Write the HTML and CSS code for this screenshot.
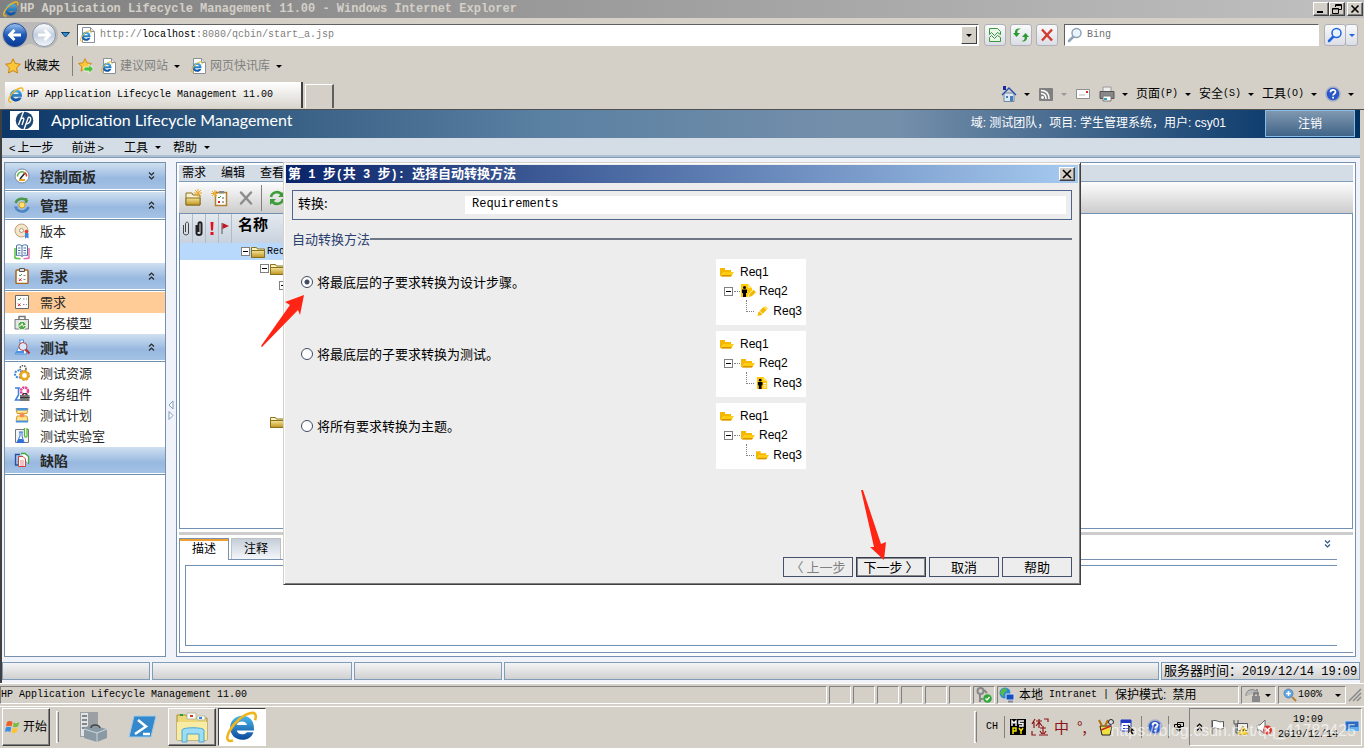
FILE: index.html
```html
<!DOCTYPE html>
<html lang="zh-CN">
<head>
<meta charset="utf-8">
<title>HP Application Lifecycle Management 11.00</title>
<link rel="stylesheet" href="styles.css">
</head>
<body>
<svg class="sprite" aria-hidden="true">
  <defs>
    <linearGradient id="gBlue" x1="0" y1="0" x2="0" y2="1"><stop offset="0" stop-color="#9cc4f0"/><stop offset=".5" stop-color="#1d58b8"/><stop offset="1" stop-color="#0a3a90"/></linearGradient>
    <linearGradient id="gGrey" x1="0" y1="0" x2="0" y2="1"><stop offset="0" stop-color="#fff"/><stop offset=".5" stop-color="#c2cede"/><stop offset="1" stop-color="#f4f8fc"/></linearGradient>
    <linearGradient id="gFold" x1="0" y1="0" x2="0" y2="1"><stop offset="0" stop-color="#f4e498"/><stop offset="1" stop-color="#c09420"/></linearGradient>
    <linearGradient id="gIe" x1="0" y1="0" x2="0" y2="1"><stop offset="0" stop-color="#4cb8ec"/><stop offset="1" stop-color="#0a489c"/></linearGradient>
  </defs>
  <symbol id="ie" viewBox="0 0 16 16">
    <path d="M14 9.700H5.400c.2 1.100 1.200 1.900 2.700 1.900 1 0 1.800-.3 2.300-1h3.300C12.900 13 11 14.400 8.200 14.400c-3.600 0-6.100-2.500-6.100-6S4.600 2.400 8.100 2.400c3.900 0 6.200 2.900 5.900 7.300zM5.400 7h5.100C10.300 5.900 9.400 5.200 8 5.200S5.600 5.900 5.400 7z" fill="url(#gIe)"/>
    <path d="M3.500 14.800C.6 15.600-.3 13.800 1.800 9.900 4.200 5.400 9 1.600 12.500 1c2.300-.4 2.900 1.200 2 3.600" fill="none" stroke="#f0b41c" stroke-width="1.300"/>
  </symbol>
  <symbol id="page" viewBox="0 0 16 16">
    <path d="M2.500 .5h8l4 4v11h-12z" fill="#fff" stroke="#8a9099"/><path d="M10.500 .5v4h4" fill="#dde" stroke="#8a9099"/>
    <use href="#ie" x="0" y="3" width="12" height="12"/>
  </symbol>
  <symbol id="star" viewBox="0 0 16 16"><path d="M8 .8l2.200 4.700 5.200.7-3.800 3.600.9 5.200L8 12.500 3.500 15l.9-5.200L.6 6.200l5.200-.7z" fill="#fcc83a" stroke="#c98210"/></symbol>
  <symbol id="open" viewBox="0 0 14 10"><path d="M0 1h5v2h6v2H4L1 9H0z" fill="#f4b800"/><path d="M4 5h10l-3 4.500H1z" fill="#ffcc10"/><path d="M1 9.500h10l1-1.500H2z" fill="#d89400"/></symbol>
  <symbol id="folder" viewBox="0 0 14 12"><path d="M.5 1.500h5l1 1.500h7v8.500H.5z" fill="#fff4c0" stroke="#88701c"/><path d="M.5 4.500h13v7H.5z" fill="url(#gFold)" stroke="#88701c"/></symbol>
  <symbol id="person" viewBox="0 0 12 13"><path d="M0 0h7l4 4v9H0z" fill="#ffc800"/><path d="M7 0v4h4z" fill="#ffe680"/><path d="M7 7h3M7 9h3M7 11h3" stroke="#fff"/><circle cx="3.500" cy="3.500" r="1.500"/><path d="M1 5.500h5V9H5v4H2V9H1z"/></symbol>
  <symbol id="pencil" viewBox="0 0 12 12"><path d="M1 11l1-4 5-5 3 3-5 5z" fill="#f4b800"/><path d="M7 2l2-1 2.500 2.500L10 5z" fill="#ffdc50"/><path d="M3 6l3 3" stroke="#fff"/></symbol>
  <symbol id="persondoc" viewBox="0 0 16 14"><path d="M0 0h7l4 4v9H0z" fill="#ffc800"/><path d="M7 0v4h4z" fill="#ffe680"/><circle cx="3.500" cy="3.500" r="1.500"/><path d="M1 5.500h5V9H5v4H2V9H1z"/><path d="M7 13.500l1-3.500 4.500-4.500L15.500 8 11 12.500z" fill="#f4b800" stroke="#fff" stroke-width=".8"/></symbol>
  <symbol id="magnify" viewBox="0 0 16 16"><path d="M6.500 9.500L2 14" stroke="currentColor" stroke-width="2.500" stroke-linecap="round"/><circle cx="9.500" cy="6" r="4.500" fill="#eaf4ff" stroke="currentColor" stroke-width="1.500"/></symbol>
  <symbol id="help" viewBox="0 0 16 16"><circle cx="8" cy="8" r="7" fill="#2a56c8" stroke="#a4aec4" stroke-width="1.500"/><path d="M5.500 6.300C5.500 3.200 10.500 3.200 10.500 6c0 1.800-2.400 1.700-2.400 3.500" fill="none" stroke="#fff" stroke-width="1.700"/><path d="M7.200 10.800h1.800v1.700H7.200z" fill="#fff"/></symbol>
  <symbol id="chev" viewBox="0 0 7 8"><path d="M1 3.500L3.500 1 6 3.500M1 7.500L3.500 5 6 7.500" fill="none" stroke="currentColor" stroke-width="1.200"/></symbol>
  <symbol id="clip" viewBox="0 0 8 15"><path d="M1.500 4v8c0 2.500 5 2.500 5 0V3c0-2.500-3-2.500-3 0v8" fill="none" stroke="currentColor"/></symbol>
</svg>

<header class="titlebar">
  <svg class="i16"><use href="#ie"/></svg><h1>HP Application Lifecycle Management 11.00 - Windows Internet Explorer</h1>
  <div class="winbtns">
    <button aria-label="最小化"><svg class="i10" viewBox="0 0 10 10"><path d="M1 8h6" stroke="#000" stroke-width="2"/></svg></button>
    <button aria-label="还原"><svg class="i10" viewBox="0 0 10 10"><path d="M3.500 3V.5h6v5H7M3 1.500h7M.5 4.500h6v5h-6zM0 5h7" fill="none" stroke="#000"/></svg></button>
    <button class="apart" aria-label="关闭"><svg class="i10" viewBox="0 0 10 10"><path d="M1.500 1.500l7 7M8.500 1.500l-7 7" stroke="#000" stroke-width="1.600"/></svg></button>
  </div>
</header>

<div class="address">
  <svg class="nav" viewBox="0 0 58 28">
    <path d="M14 1h30a13 13 0 0 1 0 26c-8 0-10-4-15-4s-7 4-15 4a13 13 0 0 1 0-26z" fill="#bcbab8"/>
    <circle cx="14" cy="14" r="11.500" fill="url(#gBlue)" stroke="#28509a"/><path d="M20 14H9M13.500 9l-5 5 5 5" fill="none" stroke="#fff" stroke-width="2.800"/>
    <circle cx="43" cy="14" r="11.500" fill="url(#gGrey)" stroke="#8894a8"/><path d="M37 14h11M43.500 9l5 5-5 5" fill="none" stroke="#fff" stroke-width="2.800"/>
  </svg>
  <svg class="recent" viewBox="0 0 9 6"><path d="M.5 .5h8L4.500 5z" fill="#2e90d0" stroke="#0c3c70"/></svg>
  <div class="well url"><svg class="i16"><use href="#page"/></svg><span class="urltext" role="textbox">http://<b>localhost</b>:8080/qcbin/start_a.jsp</span><button class="drop" aria-label="展开"><i class="tri"></i></button></div>
  <button class="soft" aria-label="兼容性视图"><svg class="i16" viewBox="0 0 16 16"><path d="M2.500 7.500v-6h8l3 3v3l-3-2-3 3-3-3zM2.500 14.500v-4l2-2 3 3 3-3 3 2v4z" fill="#eaf6e8" stroke="#38983c"/></svg></button>
  <button class="soft" aria-label="刷新"><svg class="i16" viewBox="0 0 16 16"><path d="M8 2C5 2 4 4 4.500 6H7L3.500 10 0 6h2C1.500 3 4 .5 8 2zM8 14c3 0 4-2 3.500-4H9l3.500-4L16 10h-2c.5 3-2 5.500-6 4z" fill="#2c9c30"/></svg></button>
  <button class="soft" aria-label="停止"><svg class="i16" viewBox="0 0 16 16"><path d="M3 2.500l10 11M13 2.500l-10 11" stroke="#d03c34" stroke-width="2.500"/></svg></button>
  <div class="well search"><svg class="i16 slate"><use href="#magnify"/></svg><input aria-label="搜索" placeholder="Bing"></div>
  <div class="split"><button class="soft" aria-label="搜索"><svg class="i16 blue"><use href="#magnify"/></svg></button><button class="soft narrow" aria-label="搜索选项"><i class="tri"></i></button></div>
</div>

<nav class="favorites">
  <svg class="i16"><use href="#star"/></svg><button>收藏夹</button><i class="vbar"></i>
  <svg class="i16" viewBox="0 0 16 16"><use href="#star" width="14" height="14"/><path d="M6 9h5V6.500l4.500 4.500-4.500 4.500V13H6z" fill="#48c038" stroke="#fff" stroke-width=".7"/></svg>
  <svg class="i16 gap"><use href="#page"/></svg><button class="dim">建议网站<i class="tri"></i></button>
  <svg class="i16 gap"><use href="#page"/></svg><button class="dim">网页快讯库<i class="tri"></i></button>
</nav>

<div class="tabs">
  <button class="tab"><svg class="i16"><use href="#ie"/></svg>HP Application Lifecycle Management 11.00</button><button class="newtab" aria-label="新选项卡"></button>
  <div class="commands">
    <button aria-label="主页"><svg class="i16" viewBox="0 0 16 16"><path d="M3 7h10v8.500H3z" fill="#dce8f4" stroke="#7088a8"/><path d="M8 1L.5 8.500l1 1L8 3l6.500 6.500 1-1z" fill="#2850a8"/><path d="M2 0h3v4H2z" fill="#182ca0"/><path d="M9 10h3v5H9zM5 10h2v2H5z" fill="#487cb4"/></svg><i class="tri"></i></button>
    <button aria-label="源"><svg class="i16" viewBox="0 0 16 16"><rect x="1" y="2" width="14" height="13" rx="1" fill="#808080"/><circle cx="4.500" cy="11.500" r="1.400" fill="#fff"/><path d="M3 7.500c3 0 5 2 5 5.500M3 4.500c5 0 8 3 8 8.500" fill="none" stroke="#fff" stroke-width="1.500"/></svg><i class="tri pale"></i></button>
    <button aria-label="邮件"><svg class="i16" viewBox="0 0 16 16"><path d="M1.500 3.500h13v9h-13z" fill="#fcfcfc" stroke="#909090"/><path d="M11 5h2v2h-2z" fill="#d03030"/><path d="M4 9h6" stroke="#bbb"/></svg></button>
    <button aria-label="打印"><svg class="i16" viewBox="0 0 16 16"><path d="M4 1h8v5H4z" fill="#eee" stroke="#999"/><path d="M1 5.500h14v7H1z" fill="#888" stroke="#555"/><path d="M4 10h8v5H4z" fill="#fff" stroke="#777"/><path d="M5 12h3v2H5z" fill="#30a8b0"/></svg><i class="tri"></i></button>
    <button>页面<span class="lat">(P)</span><i class="tri"></i></button>
    <button>安全<span class="lat">(S)</span><i class="tri"></i></button>
    <button>工具<span class="lat">(O)</span><i class="tri"></i></button>
    <button aria-label="帮助"><svg class="i16"><use href="#help"/></svg><i class="tri"></i></button>
  </div>
</div>

<main class="app">
  <div class="brand">
    <svg class="hp" viewBox="0 0 29 19"><rect width="29" height="19" fill="#fff"/><circle cx="14.500" cy="9.500" r="8.800" fill="#1c4674"/><path d="M13.500 .5L8.500 14M10.500 8.500c3-2.500 4-1.500 3 1L12 14M18.500 6L14 18.500M18 6.500c4.500-1.500 3 6-2 6.500" fill="none" stroke="#fff" stroke-width="1.400"/></svg>
    <h2>Application Lifecycle Management</h2>
    <p>域: 测试团队，项目: 学生管理系统，用户: csy01</p>
    <button>注销</button>
  </div>
  <nav class="menu"><button><small>&lt;</small>上一步</button><button>前进<small>&gt;</small></button><button>工具<i class="tri"></i></button><button>帮助<i class="tri"></i></button></nav>

  <div class="work">
    <aside class="side">
      <section><h3><svg class="i16" viewBox="0 0 16 16"><circle cx="8" cy="8" r="7" fill="#fff" stroke="#789"/><path d="M3.500 8.500a4.500 4.500 0 0 1 7-4" fill="none" stroke="#5cb450" stroke-width="1.500"/><path d="M10.500 4.500a4 4 0 0 1 2 4" fill="none" stroke="#e04020" stroke-width="1.500"/><path d="M6 11l4.500-5.500" stroke="#222" stroke-width="1.500"/><path d="M5 12h6" stroke="#e4a420" stroke-width="2"/></svg>控制面板<svg class="chev down"><use href="#chev"/></svg></h3></section>
      <section><h3><svg class="i16" viewBox="0 0 16 16"><path d="M1.500 6a7 7 0 0 1 12-1.500M12 1v5" fill="none" stroke="#4c9848" stroke-width="2.500"/><path d="M14.500 10a7 7 0 0 1-12 2" fill="none" stroke="#4c84c0" stroke-width="2.500"/><path d="M0 9.500h4l-2 4z" fill="#4c84c0"/><circle cx="8" cy="8" r="3" fill="#ffe46c" stroke="#d89c20"/></svg>管理<svg class="chev"><use href="#chev"/></svg></h3>
        <a href="#"><svg class="i16" viewBox="0 0 16 16"><circle cx="7.500" cy="7.500" r="6.500" fill="#f4e4c8" stroke="#c0a078"/><circle cx="7.500" cy="7.500" r="2" fill="#fff" stroke="#b09878"/><circle cx="12.500" cy="8.500" r="1.800" fill="#e03c30"/><path d="M11 10h3.500v5.500l-1.700-1-1.800 1z" fill="#3c88e0"/></svg>版本</a>
        <a href="#"><svg class="i16" viewBox="0 0 16 16"><path d="M1 4v10c2 1 4 0 5.500 1" fill="none" stroke="#5cc040" stroke-width="1.500"/><path d="M15 4v10c-2 1-4 0-5.500 1" fill="none" stroke="#e870b0" stroke-width="1.500"/><path d="M2.500 1.500c2-1 4-1 5.500.5 1.500-1.500 3.500-1.500 5.500-.5v10c-2-.5-4-.5-5.500 1-1.500-1.500-3.500-1.500-5.500-1z" fill="#fff" stroke="#4870a8"/><path d="M8 2v10M4 4h2.500M4 6.500h2.500M4 9h2.500M9.500 4H12M9.500 6.500H12M9.500 9H12" stroke="#4870a8"/></svg>库</a></section>
      <section><h3><svg class="i16" viewBox="0 0 16 16"><rect x="2" y="2" width="12" height="13.500" rx="1" fill="#fff" stroke="#a86820" stroke-width="1.500"/><path d="M5.500 .5h5v3h-5z" fill="#ddd" stroke="#555"/><path d="M5 7l1 1 2-2" fill="none" stroke="#3c9c40"/><path d="M5 10.500l2.500 2.500M7.500 10.500L5 13" stroke="#d02828"/><path d="M9.500 7.500h2M9.500 11.500h2" stroke="#888"/></svg>需求<svg class="chev"><use href="#chev"/></svg></h3>
        <a class="on" href="#"><svg class="i16" viewBox="0 0 16 16"><path d="M1.500 1.500h13v13h-13z" fill="#fff" stroke="#666"/><path d="M4 5l1 1 2-2" fill="none" stroke="#3c9c40"/><path d="M4 9.500L6.500 12M6.500 9.500L4 12" stroke="#d02828"/><path d="M9 5h1.500M12 5h1M9 10.500h1.500M12 10.500h1" stroke="#888"/></svg>需求</a>
        <a href="#"><svg class="i16" viewBox="0 0 16 16"><path d="M1 4.500h13.500v9.500H1z" fill="#e4e4e4" stroke="#777"/><path d="M5 4V1.500h6V4" fill="none" stroke="#777" stroke-width="1.500"/><circle cx="8" cy="10.500" r="4.300" fill="#54a84c" stroke="#fff"/><path d="M4.500 11h2l1.500-2.500 1.500 3 1-1h1.500" fill="none" stroke="#fff"/></svg>业务模型</a></section>
      <section><h3><svg class="i16" viewBox="0 0 16 16"><path d="M5 1h5M6 1v5L1 15h12L9.500 6V1" fill="#fff" stroke="#4c90e0"/><path d="M3 12h7v2.500H1.500z" fill="#4c90e0"/><circle cx="9" cy="7.500" r="4" fill="#dce8f8" stroke="#b04848"/><path d="M12 10.500l3.500 4" stroke="#b03030" stroke-width="2"/></svg>测试<svg class="chev"><use href="#chev"/></svg></h3>
        <a href="#"><svg class="i16" viewBox="0 0 16 16"><circle cx="9" cy="3.500" r="3" fill="none" stroke="#555" stroke-width="1.500" stroke-dasharray="1.500 1"/><circle cx="4.500" cy="9" r="3.500" fill="none" stroke="#3c80e0" stroke-width="2" stroke-dasharray="2 1"/><circle cx="10.500" cy="10.500" r="3.700" fill="#fff" stroke="#e8a820" stroke-width="2.500"/><circle cx="10.500" cy="10.500" r="5" fill="none" stroke="#d08c10" stroke-dasharray="2 1.900"/></svg>测试资源</a>
        <a href="#"><svg class="i16" viewBox="0 0 16 16"><path d="M1 2h5M4.500 2v7L1.500 14H7" fill="none" stroke="#3c80e0" stroke-width="1.500"/><circle cx="10.500" cy="5" r="3.500" fill="none" stroke="#e83c8c" stroke-width="2.500" stroke-dasharray="2 .8"/><path d="M6 9h9.500v6H6z" fill="#777"/><path d="M9 9V7.500h4V9M6 11.500h9.500" fill="none" stroke="#333"/></svg>业务组件</a>
        <a href="#"><svg class="i16" viewBox="0 0 16 16"><path d="M2 1.500h12l-1 5H3z" fill="#ffe48c" stroke="#d89830"/><path d="M2.500 1h11v2.500h-11z" fill="#4890d8"/><path d="M3 9h10l1 5.500H2z" fill="#ffe48c" stroke="#d89830"/><path d="M2 14.500h12" stroke="#4890d8" stroke-width="2"/><circle cx="8" cy="8" r="2.500" fill="#f09050"/></svg>测试计划</a>
        <a href="#"><svg class="i16" viewBox="0 0 16 16"><path d="M1.500 1.500h13v13h-13z" fill="#f4f4f4" stroke="#777"/><path d="M5 4h4M6 4v4l-3 6.500h7L8 8V4" fill="#fff" stroke="#2c70d8"/><path d="M4.500 11h4l1.500 4H3z" fill="#2c70d8"/><path d="M10.500 0v8c0 1.500 2.500 1.500 2.500 0V0" fill="#fff" stroke="#50b838" stroke-width="1.300"/></svg>测试实验室</a></section>
      <section><h3><svg class="i16" viewBox="0 0 16 16"><path d="M4 13H1.500V2.500H6" fill="none" stroke="#2850a0" stroke-width="1.300"/><path d="M7 1.500h4l3.500 3V12" fill="#fff" stroke="#40a838" stroke-width="1.300"/><path d="M4.500 4.500H9L11.500 7v7.500h-7z" fill="#fff" stroke="#d04040"/><path d="M6 9h4M6 11h4M6 13h4" stroke="#d88"/></svg>缺陷</h3></section>
    </aside>

    <div class="grip" aria-hidden="true"><svg viewBox="0 0 6 20"><path d="M5 1v8L1 5zM1 11.500v8l4-4z" fill="#fff" stroke="#7f9db9"/></svg></div>

    <section class="panel">
      <nav class="menu sub"><button>需求</button><button>编辑</button><button>查看</button></nav>
      <div class="tools">
        <button aria-label="新建文件夹"><svg class="i18" viewBox="0 0 18 18"><path d="M1 4h6l1 2h7v10H1z" fill="#f8f0d0" stroke="#88701c"/><path d="M1 9h14v7H1z" fill="url(#gFold)" stroke="#88701c"/><path d="M13 0v8M9 4h8M10 1l6 6M16 1l-6 6" stroke="#eca828"/></svg></button>
        <button aria-label="新建需求"><svg class="i18" viewBox="0 0 18 18"><path d="M4.500 3.500h11v13h-11z" fill="#fff" stroke="#b08030" stroke-width="1.500"/><path d="M8 2h5v2.500H8z" fill="#888"/><path d="M7 8l1 1 2-2" fill="none" stroke="#2c8c30"/><path d="M7 12l2 2M9 12l-2 2" stroke="#c22"/><path d="M11 9h2M11 13h2" stroke="#555"/><path d="M4 1v7M0 4.500h7M1 2l5 5M6 2L1 7" stroke="#eca828"/></svg></button>
        <button aria-label="删除"><svg class="i18" viewBox="0 0 18 18"><path d="M4 3.500l10 11M14 3.500L4 14.500" stroke="#8c8c8c" stroke-width="2.500" stroke-linecap="round"/></svg></button>
        <i class="vbar"></i>
        <button aria-label="刷新"><svg class="i18" viewBox="0 0 18 18"><path d="M3 8a6 6 0 0 1 11-2M15 10a6 6 0 0 1-11 2" fill="none" stroke="#3c9c38" stroke-width="2.600"/><path d="M16 2v6h-6zM2 16v-6h6z" fill="#3c9c38"/></svg></button>
      </div>
      <div class="grid">
        <div class="cols"><span><svg class="clip"><use href="#clip"/></svg></span><span><svg class="clip heavy"><use href="#clip"/></svg></span><span><svg class="clip" viewBox="0 0 8 15"><path d="M2.500 1h3L5 9.500H3zM2.500 11h3v3h-3z" fill="#e01020"/></svg></span><span><svg class="clip" viewBox="0 0 8 15"><path d="M1 2v11" stroke="#555"/><path d="M1.500 2l6.500 3-6.500 3z" fill="#c01820"/></svg></span><strong>名称</strong></div>
        <ul class="tree">
          <li class="l0 sel"><i class="box"></i><svg class="fold"><use href="#folder"/></svg><span>Requirements</span></li>
          <li class="l1"><i class="box"></i><svg class="fold"><use href="#folder"/></svg></li>
          <li class="l2"><i class="box"></i></li>
          <li></li><li></li><li></li><li></li><li></li><li></li><li></li>
          <li class="l1"><i class="box none"></i><svg class="fold"><use href="#folder"/></svg></li>
        </ul>
      </div>
      <div class="detail">
        <div class="dtabs"><button class="on">描述</button><button>注释</button><svg class="chev down"><use href="#chev"/></svg></div>
        <div class="dbody"><div class="memo"></div></div>
      </div>
    </section>
  </div>
  <footer class="cells"><span></span><span class="w2"></span><span></span><span class="w4"></span><span class="time">服务器时间：<span class="m">2019/12/14 19:09</span></span></footer>
</main>

<footer class="status">
  <span class="msg">HP Application Lifecycle Management 11.00</span>
  <span class="s"></span><span class="s"></span><span class="s"></span><span class="s"></span><span class="s"></span><span class="s"></span>
  <span class="s"><svg class="i16" viewBox="0 0 16 16"><circle cx="4.500" cy="4" r="3" fill="none" stroke="#888" stroke-width="2"/><path d="M4 7v8M4 12h3M8 3l3 3" stroke="#888" stroke-width="2"/><circle cx="11.500" cy="11.500" r="4.300" fill="#2ea838"/><path d="M9.500 11.500l1.500 1.500 2.500-3" fill="none" stroke="#fff" stroke-width="1.300"/></svg></span>
  <span class="zone"><svg class="i16" viewBox="0 0 16 16"><circle cx="6" cy="6" r="5.500" fill="#2c88d0"/><path d="M3 2l4-1 1 3-3 2-1 4-3-4z" fill="#58b848"/><path d="M7 7h8v6H7z" fill="#1450c0" stroke="#dde"/><path d="M9 14.500h5" stroke="#889" stroke-width="2"/></svg>本地<span class="lat"> Intranet | </span>保护模式:<span class="lat"> </span>禁用</span>
  <span class="lock"><svg class="i16" viewBox="0 0 16 16"><path d="M1 9a6 6 0 0 1 10-5l1-2 1 5H8" fill="#bbb" stroke="#888"/><path d="M7 9h8v6H7z" fill="#888"/><path d="M9 9V6h4v3" fill="none" stroke="#777" stroke-width="1.500"/></svg><i class="tri"></i></span>
  <span class="zoom"><svg class="i14" viewBox="0 0 14 14"><circle cx="5.500" cy="5.500" r="4.500" fill="#5aa4e8" stroke="#6888a8"/><path d="M3 5.500h5M5.500 3v5" stroke="#fff" stroke-width="1.500"/><path d="M9 9l4 4" stroke="#b88038" stroke-width="2"/></svg><span class="lat">100%</span><i class="tri end"></i></span>
  <svg class="i14" viewBox="0 0 14 14"><path d="M1 13L13 1M5 13l8-8M9 13l4-4" stroke="#888" stroke-width="1.500"/></svg>
</footer>

<footer class="taskbar">
  <button class="start"><svg class="i16" viewBox="0 0 16 16"><path d="M2 3c2-1.500 4-1 5.500 0l-1 4.500C5 6.500 3 6.500 1 7.500z" fill="#f05c28"/><path d="M8.500 3.500c2 1 4 .8 6-.5l-1.500 4.500c-1.500 1-3.500 1-5 .2z" fill="#7cbc3c"/><path d="M.8 8.500c2-1 3.700-1 5.500 0l-1 4.500c-1.700-1-3.500-1-5.300 0z" fill="#3c8ce0"/><path d="M7.500 9c1.700.8 3.500.8 5.500-.2l-1.500 4.500c-1.500 1-3.500 1-5 .2z" fill="#fcc430"/></svg>开始</button>
  <i class="vgroove"></i>
  <button class="task"><svg class="i32" viewBox="0 0 32 32"><path d="M4 1h18v25H4z" fill="#9aa0a4"/><path d="M5 2h7v23H5z" fill="#e0e4e6"/><path d="M6 5h5M6 9h5M6 13h5M6 17h5" stroke="#666" stroke-width="1.500"/><path d="M8 17l6-3 17 4v9l-10 4-13-4z" fill="#8a9aa4"/><path d="M8 18l13 4 10-4M21 22v9" fill="none" stroke="#cdd6dc"/><path d="M15 17c0-4 8-4 9 0" fill="none" stroke="#444" stroke-width="1.500"/></svg></button>
  <button class="task"><svg class="i32" viewBox="0 0 32 32"><path d="M8 5h22l-5 21H3z" fill="#3488cc" stroke="#a4cce8"/><path d="M12 9l8 6.500L9 23M17 23h7" fill="none" stroke="#fff" stroke-width="2.500"/></svg></button>
  <button class="task up"><svg class="i32" viewBox="0 0 32 32"><path d="M1 4h9l2 3h19v22H1z" fill="#ecd878" stroke="#a88c34"/><path d="M11 2h9v6h-9zM21 5h8v4h-8z" fill="#fff" stroke="#b8b8a0"/><path d="M4 3h3v2H4z" fill="#28a030"/><path d="M14 4h3v2h-3z" fill="#d03c20"/><path d="M23 6h3v2h-3z" fill="#2c88e0"/><path d="M1 11h30v18H1z" fill="#f8eca4"/><path d="M6 31V19c0-3 22-3 22 0v12h-5v-8H11v8z" fill="#9cdcf4" stroke="#4ca8d0"/></svg></button>
  <button class="task down"><svg class="i32"><use href="#ie"/></svg></button>
  <div class="tray">
    <i class="vgroove"></i><span class="lat ch">CH</span><i class="vbar"></i>
    <svg class="i16" viewBox="0 0 16 16"><path d="M0 0h16v16H0z"/><path d="M2 7V2l2 2 2-2v5M14 2H9v2.500h4V7H9" fill="none" stroke="#fff" stroke-width="1.400"/><path d="M3 15V9h3v3H3M9 9l2 3 2-3M11 12v3" fill="none" stroke="#f0e000" stroke-width="1.500"/></svg>
    <svg class="i18 red" viewBox="0 0 18 18"><path d="M4 1L1 6M3 4v6M8 1v9M5 3h6M8 4l-3 4M8 4l3 4M13 1h4v3M1 13v4h4M9 10h6M12 8v8M9 13l2 3M15 13l-2 3M8 17h9" fill="none" stroke="currentColor" stroke-width="1.200"/></svg>
    <span class="zhong">中</span><span class="zhong dot">°,</span>
    <svg class="i18" viewBox="0 0 18 18"><path d="M3 8h12l-2 9H5z" fill="#f0e040" stroke="#222"/><path d="M5 8L2 2M8 8l3-6" stroke="#b07010" stroke-width="2"/><circle cx="14" cy="4" r="2.500" fill="#ddd" stroke="#222"/><path d="M4 12l10-4" stroke="#c22" stroke-width="1.500"/></svg>
    <svg class="i16" viewBox="0 0 16 16"><path d="M1 1h10v11H1z" fill="#fff" stroke="#2038c0"/><path d="M1 1h10v3H1zM3 6h6v1H3zM3 9h6v1H3z" fill="#2038c0"/><path d="M8 5l7 7h-3l2 3-2 1-2-3-2 2z" stroke="#fff" stroke-width=".5"/></svg>
    <i class="vbar"></i><svg class="i16"><use href="#help"/></svg><i class="vbar"></i>
    <svg class="i10" viewBox="3 3 10 10"><path d="M6.500 3.500h6v4h-6zM3.500 5.500h6v3h-6z" fill="#d4d0c8" stroke="#000"/><path d="M5 10h6l-3 3z"/></svg>
    <div class="notify">
      <svg class="chev"><use href="#chev"/></svg>
      <svg class="i16" viewBox="0 0 16 16"><path d="M2 1v15M2.500 2c4-2 5 2 11 .5v7c-6 2-7-2-11 0z" fill="#fff" stroke="#555"/></svg>
      <svg class="i16" viewBox="0 0 16 16"><path d="M4.500 4.500h10v7h-10z" fill="#eee" stroke="#555"/><path d="M1 1v4h4V1M3 5v9h4" fill="none" stroke="#555"/><path d="M10 7l5 8.500H5z" fill="#fcd020" stroke="#a88000" stroke-width=".6"/><path d="M10 10v3" stroke="#000"/></svg>
      <svg class="i16" viewBox="0 0 16 16"><path d="M1 6h3l5-5v14l-5-4H1z" fill="#fff" stroke="#666"/><circle cx="11.500" cy="11" r="4.500" fill="#d83028"/><path d="M9.500 9l4 4M13.500 9l-4 4" stroke="#fff" stroke-width="1.300"/></svg>
      <time class="lat">19:09<br>2019/12/14</time>
      <svg class="i16" viewBox="0 0 16 16"><path d="M1 2h14v10H1z" fill="#2c6cc0" stroke="#c8dcf0"/><path d="M1 12l6-4h8v4z" fill="#60b0f0"/></svg>
    </div>
    <span class="mark">https://blog.csdn.net/qq_41782425</span>
  </div>
</footer>

<div class="overlay">
  <section class="dialog" role="dialog" aria-labelledby="dt">
    <header><h2 id="dt">第<span class="m"> 1 </span>步<span class="m">(</span>共<span class="m"> 3 </span>步<span class="m">): </span>选择自动转换方法</h2><button aria-label="关闭"><svg class="i10" viewBox="0 0 10 10"><path d="M1 1l8 8M9 1L1 9" stroke="#000" stroke-width="1.600"/></svg></button></header>
    <form>
      <div class="field"><label for="src">转换:</label><input id="src" value="Requirements" readonly></div>
      <h4>自动转换方法</h4>
      <div class="choice"><label><input type="radio" name="m" checked>将最底层的子要求转换为设计步骤。</label>
        <div class="thumb"><p><svg class="op"><use href="#open"/></svg>Req1</p><p class="t2"><i class="box"></i><i class="dash"></i><svg class="ps"><use href="#persondoc"/></svg>Req2</p><p class="t3"><i class="elbow"></i><svg class="pn"><use href="#pencil"/></svg>Req3</p></div></div>
      <div class="choice"><label><input type="radio" name="m">将最底层的子要求转换为测试。</label>
        <div class="thumb"><p><svg class="op"><use href="#open"/></svg>Req1</p><p class="t2"><i class="box"></i><i class="dash"></i><svg class="op"><use href="#open"/></svg>Req2</p><p class="t3"><i class="elbow"></i><svg class="pn"><use href="#person"/></svg>Req3</p></div></div>
      <div class="choice"><label><input type="radio" name="m">将所有要求转换为主题。</label>
        <div class="thumb"><p><svg class="op"><use href="#open"/></svg>Req1</p><p class="t2"><i class="box"></i><i class="dash"></i><svg class="op"><use href="#open"/></svg>Req2</p><p class="t3"><i class="elbow"></i><svg class="pn"><use href="#open"/></svg>Req3</p></div></div>
      <div class="actions"><button type="button" disabled>〈 上一步</button><button type="button" class="default">下一步 〉</button><button type="button">取消</button><button type="button">帮助</button></div>
    </form>
    <svg class="arrow a1" viewBox="0 0 44 52"><path d="M43 0L24 7l5 3L0 51l1 1 36-37 2 5z" fill="#ff2414"/></svg>
    <svg class="arrow a2" viewBox="0 0 26 70"><path d="M0 0h2l18 54 5-2-2 18L9 57l4 0z" fill="#ff2414"/></svg>
  </section>
</div>
</body>
</html>
```
FILE: styles.css
```css
* { box-sizing: border-box; }
body { margin: 0; height: 100vh; display: flex; flex-direction: column; overflow: hidden; background: #d4d0c8; color: #000; font: 12px/16px "Liberation Sans", "Noto Sans CJK SC", sans-serif; position: relative; }
h1, h2, h3, h4, p, ul { margin: 0; padding: 0; font-weight: normal; }
ul { list-style: none; }
button { font: inherit; color: inherit; background: none; border: 0; padding: 0; display: flex; align-items: center; justify-content: center; white-space: nowrap; }
input { font: inherit; }
a { color: inherit; text-decoration: none; }
svg { flex: none; display: block; }
.sprite { position: absolute; width: 0; height: 0; }
.i10 { width: 10px; height: 10px; }
.i14 { width: 14px; height: 14px; }
.i16 { width: 16px; height: 16px; }
.i18 { width: 18px; height: 18px; }
.i32 { width: 32px; height: 32px; }
.lat { font: 10px/14px "Liberation Mono", monospace; white-space: pre; }
.m { font-family: "Liberation Mono", monospace; font-size: 12px; white-space: pre; }
.tri { display: inline-block; border: 3px solid transparent; border-top-color: #000; border-bottom: 0; }
.tri.pale { border-top-color: #999; }
.vbar { width: 1px; height: 20px; background: #848078; }
.vgroove { width: 3px; height: 32px; border: 1px solid #fff; border-right-color: #808080; }
.slate { color: #8fa3b5; }
.blue { color: #1c64e0; }
.red { color: #8c1414; }

.titlebar { height: 18px; display: flex; align-items: center; padding: 0 1px 0 3px; background: linear-gradient(90deg, #808080, #c0c0c0); }
.titlebar h1 { flex: 1; margin-left: 1px; font: bold 12px/16px "Liberation Mono", monospace; color: #d4d0c8; }
.winbtns { display: flex; }
.winbtns button, .dialog header button { width: 16px; height: 14px; background: #d4d0c8; border: 1px solid; border-color: #fff #404040 #404040 #fff; box-shadow: inset -1px -1px #808080; }
.winbtns .apart { margin-left: 2px; }

.address { height: 34px; display: flex; align-items: center; padding: 0 6px 0 1px; }
.nav { width: 58px; height: 28px; }
.recent { width: 9px; height: 6px; margin: 0 7px 0 2px; }
.well { height: 22px; display: flex; align-items: center; background: #fff; border: 1px solid; border-color: #606060 #fff #fff #606060; box-shadow: 0 0 0 1px #d4d0c8; }
.url { flex: 1; padding-left: 2px; color: #808080; font: 10px/16px "Liberation Mono", monospace; }
.url b { font-weight: normal; color: #000; }
.urltext { flex: 1; margin-left: 4px; }
.drop { width: 16px; height: 18px; margin-right: 1px; background: #d4d0c8; border: 1px solid; border-color: #fff #404040 #404040 #fff; }
.soft { width: 22px; height: 22px; margin-left: 4px; border: 1px solid #b0b0b8; border-radius: 3px; background: linear-gradient(#fafafa, #dcdee6); }
.url + .soft { margin-left: 5px; }
.search { width: 255px; margin-left: 6px; padding-left: 2px; }
.search input { flex: 1; min-width: 0; border: 0; outline: 0; background: none; font: 10px/16px "Liberation Mono", monospace; padding: 0 4px; }
.search input::placeholder { color: #707070; }
.split { display: flex; margin-left: 5px; }
.split .soft { margin-left: 0; }
.split .narrow { width: 13px; margin-left: -1px; }
.split .tri { border-top-color: #1c64e0; }

.favorites { height: 28px; display: flex; align-items: center; padding-left: 5px; }
.favorites button { margin-left: 3px; }
.favorites .vbar { margin: 0 5px 0 12px; }
.favorites .gap { margin-left: 7px; }
.favorites .dim { color: #808080; }
.favorites .tri { margin: 0 4px 0 6px; }

.tabs { height: 30px; display: flex; align-items: flex-end; padding: 0 10px 1px 5px; border-bottom: 1px solid #505050; }
.tab { width: 298px; height: 26px; justify-content: flex-start; gap: 3px; padding-left: 3px; font: 10px/16px "Liberation Mono", monospace; background: linear-gradient(#fff, #d8d5ce); border-right: 2px solid #404040; }
.newtab { width: 29px; height: 24px; margin-left: 2px; border: 1px solid #fff; border-right: 2px solid #606060; border-bottom: 0; }
.commands { flex: 1; display: flex; justify-content: flex-end; align-items: center; height: 28px; gap: 8px; }
.commands button { gap: 4px; }
.commands .tri { margin-left: 3px; }
.commands .lat { margin-left: -4px; }

.app { flex: 1; min-height: 0; margin-right: 4px; display: flex; flex-direction: column; background: #f0f4fa; border-left: 2px solid #404040; }
.brand { height: 28px; display: flex; align-items: flex-start; padding: 0 5px 1px 8px; color: #fff; background: linear-gradient(90deg, #0c3768, #3c6488 23%, #5a80a2 40%, #748faa 62%, #748faa 66%, #0c3b6c 94%, #003060); }
.hp { width: 29px; height: 19px; margin-top: 1px; }
.brand h2 { flex: 1; margin-left: 12px; font: 16px/20px Lato, sans-serif; }
.brand p { margin: 5px 39px 0 0; }
.brand button { width: 90px; height: 27px; border: 1px solid #86bce8; background: linear-gradient(#8098b0, #406488); }
.menu { height: 20px; display: flex; align-items: center; gap: 18px; padding-left: 7px; background: #d4dce6; border-bottom: 1px solid #7f9db9; box-shadow: inset 0 -2px #aebfd0; }
.menu small { font-size: 11px; margin: 0 2px; }
.menu .tri { margin-left: 7px; }
.menu button:first-child small { margin-left: 0; }
.menu button:last-child { margin-left: -6px; }
.menu.sub { height: 17px; gap: 15px; padding-left: 3px; box-shadow: none; }
.menu.sub button:last-child { margin: 0; }

.work { flex: 1; min-height: 0; display: flex; padding: 4px 4px 5px 2px; }
.side { width: 162px; background: #fff; border: 1px solid #7890ac; }
.side h3 { height: 29px; display: flex; align-items: center; padding: 0 10px 3px 9px; font: bold 14px/18px "Noto Sans CJK SC", sans-serif; color: #282828; background: linear-gradient(#cfe0f0, #98b8e0 60%, #a4c2e4) no-repeat 0 0 / 100% 26px; box-shadow: inset 0 -1px #fff, inset 0 -2px #7090b0; }
.side h3 > .i16, .side a > .i16 { margin-right: 10px; }
.side h3 .chev { margin-left: auto; }
.chev { width: 7px; height: 8px; }
.chev.down { transform: rotate(180deg); }
.side a { height: 21px; display: flex; align-items: center; padding: 0 0 2px 9px; font: 13px/18px "Noto Sans CJK SC", sans-serif; color: #282828; }
.side a.on { background: #ffcc98; }
.grip { width: 10px; display: grid; place-items: center; }
.grip svg { width: 6px; height: 20px; }

.panel { flex: 1; min-width: 0; display: flex; flex-direction: column; padding: 2px 2px 3px; background: #fff; border: 1px solid #7890b0; }
.tools { height: 31px; display: flex; align-items: center; gap: 8px; padding-left: 6px; background: linear-gradient(#fdfdfd, #ccc); }
.tools .vbar { height: 26px; margin: 0 -2px; }
.grid { flex: 1; min-height: 0; overflow: hidden; border: 1px solid #7090b4; }
.cols { width: 50%; height: 29px; display: flex; background: linear-gradient(#e4e9ef, #c8d2de); }
.cols span { width: 13px; display: grid; place-items: center; border-right: 1px solid #b0bcc8; }
.cols strong { padding: 1px 6px; font: bold 15px/18px "Noto Sans CJK SC", sans-serif; }
.clip { width: 8px; height: 15px; color: #444; }
.heavy { stroke-width: 2; color: #222; }
.tree li { width: 50%; height: 17px; display: flex; align-items: center; gap: 1px; padding-left: 61px; font: 10px/14px "Liberation Mono", monospace; }
.tree li.l1 { padding-left: 80px; }
.tree li.l2 { padding-left: 99px; }
.tree .sel { background: #b8d8fc; }
.tree span { margin-left: 1px; }
.fold { width: 14px; height: 12px; }
.box { flex: none; width: 9px; height: 9px; border: 1px solid #808080; background: linear-gradient(#000, #000) center / 5px 1px no-repeat #fff; }
.box.none { visibility: hidden; }
.detail { height: 121px; margin-top: 3px; display: flex; flex-direction: column; border-top: 3px solid #ccc; }
.dtabs { display: flex; align-items: flex-end; margin-top: 3px; padding-right: 22px; }
.dtabs button { width: 50px; height: 22px; padding-bottom: 1px; margin-left: 2px; border: 1px solid #c0c0c0; border-bottom: 1px solid #7890b0; background: linear-gradient(#c4ced8, #f4f6fa); }
.dtabs .on { margin: 0; border: 1px solid #7890b0; border-bottom-color: #fff; background: linear-gradient(#f0a030, #f0a030) top / 100% 2px no-repeat #fff; }
.dtabs .chev { margin: 0 0 12px auto; color: #2c5484; }
.dbody { flex: 1; margin-top: -1px; padding: 5px 16px 5px 5px; border: 1px solid #7890b0; border-width: 0 0 1px 1px; }
.dbody::before { content: ""; display: block; height: 1px; margin: -5px 0 5px 43px; background: #7890b0; }
.memo { height: 81px; border: 1px solid #7090b4; border-right: 0; }
.cells { display: flex; gap: 2px; height: 21px; padding-bottom: 3px; }
.cells > span { width: 148px; border: 1px solid #7f9db9; background: linear-gradient(#f4f4f4, #d0d0d0); }
.cells .w2 { width: 200px; }
.cells .w4 { flex: 1; }
.cells .time { width: 199px; padding-left: 2px; font-size: 13px; line-height: 15px; white-space: nowrap; }

.status { height: 23px; display: flex; align-items: center; gap: 2px; padding-right: 2px; border-top: 1px solid #fff; }
.status > span { height: 18px; display: flex; align-items: center; border: 1px solid; border-color: #808080 #fff #fff #808080; }
.status .msg { flex: 1; font: 10px/16px "Liberation Mono", monospace; }
.status .s { width: 22px; justify-content: center; }
.status .zone { width: 242px; padding-left: 1px; }
.zone .i16 { margin-right: 4px; }
.status .lock { width: 35px; gap: 4px; padding-left: 3px; }
.status .zoom { width: 68px; gap: 1px; padding: 0 4px; }
.status .end { margin-left: auto; }

.taskbar { height: 42px; display: flex; align-items: center; padding: 1px 2px 2px; border-top: 1px solid #fff; }
.taskbar button { width: 48px; height: 38px; }
.start { gap: 2px; }
.taskbar .start, .taskbar .up { border: 1px solid; border-color: #fff #404040 #404040 #fff; box-shadow: inset -1px -1px #808080; }
.taskbar > .vgroove { margin: 0 9px 0 6px; }
.task + .task { margin-left: 2px; }
.taskbar .up { background: #dcd8d0; }
.taskbar .down { background: #fff; border: 1px solid; border-color: #404040 #fff #fff #404040; }
.tray { position: relative; margin-left: auto; display: flex; align-items: center; gap: 5px; }
.tray .vbar { height: 22px; }
.ch { margin: 0 1px 0 4px; }
.zhong { font: 15px/18px "Noto Sans CJK SC", sans-serif; color: #8c1414; }
.dot { width: 14px; margin: 0 1px 0 3px; }
.notify { height: 38px; display: flex; align-items: center; gap: 7px; padding: 0 1px 0 6px; border: 1px solid; border-color: #808080 #fff #fff #808080; }
.notify time { width: 62px; margin: 0 -2px; text-align: center; line-height: 15px; }
.mark { position: absolute; right: 6px; top: 14px; font: 16px/18px "Liberation Sans", sans-serif; color: rgba(255, 255, 255, .65); }

.overlay { position: absolute; inset: 0; display: flex; justify-content: center; align-items: flex-start; padding-top: 162px; pointer-events: none; }
.dialog { position: relative; width: 798px; padding: 2px; background: #ededed; border: 1px solid; border-color: #d4d0c8 #404040 #404040 #d4d0c8; box-shadow: inset 1px 1px #fff, inset -1px -1px #808080; font: 13px/18px "Noto Sans CJK SC", sans-serif; pointer-events: auto; }
.dialog header { height: 18px; display: flex; align-items: center; padding: 0 3px 0 2px; color: #fff; background: linear-gradient(90deg, #0a246a, #a6caf0); }
.dialog h2 { flex: 1; font-size: 13px; font-weight: bold; line-height: 18px; }
.dialog form { padding: 7px 6px 5px; }
.field { height: 30px; display: flex; align-items: center; padding: 0 5px; border: 1px solid #4f648c; }
.field label { width: 167px; padding-bottom: 4px; }
.field input { flex: 1; height: 18px; border: 0; padding: 0 7px 3px; background: #fff; font: 12px/14px "Liberation Mono", monospace; }
.dialog h4 { display: flex; align-items: center; margin: 10px 0 11px; font-size: 13px; line-height: 18px; color: #2c4070; }
.dialog h4::after { content: ""; flex: 1; height: 2px; background: #707888; }
.choice { display: flex; align-items: flex-start; margin-bottom: 6px; padding-left: 9px; }
.choice label { width: 415px; height: 18px; margin-top: 14px; display: flex; align-items: center; gap: 4px; }
.choice input { appearance: none; width: 12px; height: 12px; margin: 0; border: 1px solid #404a60; border-radius: 50%; background: #fff; }
.choice input:checked { background: radial-gradient(#404a60 0 2px, #fff 3px); }
.thumb { width: 90px; height: 66px; padding: 3px 4px 5px; background: #fff; font: 12px/18px "Liberation Sans", sans-serif; }
.thumb p { display: flex; align-items: center; height: 19px; }
.thumb .op { width: 14px; height: 10px; margin-right: 6px; }
.thumb .t2 { padding-left: 4px; height: 20px; }
.thumb .t2 .op { margin-right: 4px; }
.thumb .t3 { padding-left: 26px; }
.ps { width: 16px; height: 14px; margin-right: 2px; }
.dash { width: 6px; margin: 0 1px 0 1px; border-top: 1px dotted #808080; }
.elbow { width: 11px; height: 12px; margin: -10px 2px 0 0; border: 1px dotted #808080; border-width: 0 0 1px 1px; }
.pn { width: 13px; height: 12px; margin-right: 4px; }
.actions { display: flex; justify-content: flex-end; gap: 3px; margin-top: 88px; }
.actions button { width: 70px; height: 20px; border: 1px solid #44506c; }
.actions button:disabled { color: #808080; }
.actions .default { box-shadow: inset 0 0 0 1px #888; border-color: #333c50; }
.arrow { position: absolute; pointer-events: none; }
.a1 { width: 44px; height: 52px; left: -23px; top: 132px; }
.a2 { width: 26px; height: 70px; left: 577px; top: 327px; }
```
